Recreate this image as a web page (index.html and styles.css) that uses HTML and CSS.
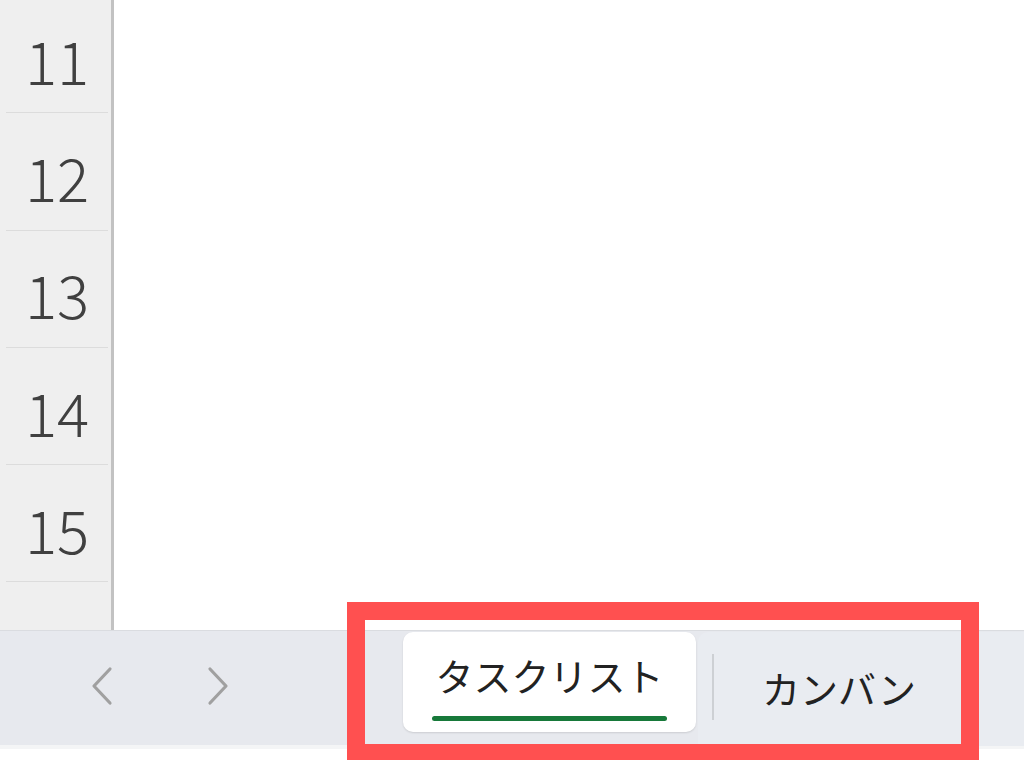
FILE: index.html
```html
<!DOCTYPE html>
<html>
<head>
    <title>Sheet tabs</title>
    <link rel="stylesheet" href="styles.css">
</head>
<body>
    <div class="sheet">
        <div class="row-heads">
            <div class="row-list">
                <div class="row-head">11</div>
                <div class="row-head">12</div>
                <div class="row-head">13</div>
                <div class="row-head">14</div>
                <div class="row-head">15</div>
                <div class="row-head"></div>
            </div>
        </div>
        <div class="cells"></div>
    </div>

    <div class="tab-bar">
        <div class="nav">
            <button class="nav-btn" title="前へ">
                <svg width="24" height="40" viewBox="0 0 24 40"><path d="M20 3 L4 20 L20 37" fill="none" stroke="#a0a0a0" stroke-width="3.2" stroke-linecap="round" stroke-linejoin="round"/></svg>
            </button>
            <button class="nav-btn" title="次へ">
                <svg width="24" height="40" viewBox="0 0 24 40"><path d="M4 3 L20 20 L4 37" fill="none" stroke="#a0a0a0" stroke-width="3.2" stroke-linecap="round" stroke-linejoin="round"/></svg>
            </button>
        </div>
        <div class="tab active">
            <span class="tab-label">タスクリスト</span>
            <span class="tab-line"></span>
        </div>
        <div class="tab inactive">
            <span class="tab-sep"></span>
            <span class="tab-label">カンバン</span>
        </div>
    </div>
    <div class="status-strip"></div>

    <!-- 注目枠 -->
    <div class="highlight"></div>
</body>
</html>
```

FILE: styles.css
```css
body {
    margin: 0;
    padding: 0;
    width: 1024px;
    height: 760px;
    overflow: hidden;
    position: relative;
    background-color: #ffffff;
    font-family: "Noto Sans CJK JP", "Noto Sans", sans-serif;
}
.sheet {
    display: flex;
    height: 630px;
}
.row-heads {
    width: 111px;
    background-color: #efefef;
    border-right: 3px solid #c2c2c2;
    overflow: hidden;
}
.row-list {
    margin-top: -4px;
}
.row-head {
    box-sizing: border-box;
    height: 117.3px;
    margin: 0 3px 0 6px;
    border-bottom: 1px solid #dcdcdc;
    display: flex;
    align-items: center;
    justify-content: center;
    font-size: 60px;
    font-weight: 300;
    color: #404040;
    padding-top: 8px;
}
.cells {
    flex: 1;
    background-color: #ffffff;
}
.tab-bar {
    box-sizing: border-box;
    display: flex;
    align-items: flex-start;
    height: 115px;
    background-color: #e7e9ee;
    border-top: 1px solid #dadce0;
}
.nav {
    width: 403px;
    display: flex;
    align-items: center;
    height: 110px;
    padding-left: 90px;
    box-sizing: border-box;
    gap: 92px;
}
.nav-btn {
    background: none;
    border: none;
    padding: 0;
    width: 24px;
    height: 40px;
    cursor: pointer;
}
.tab {
    box-sizing: border-box;
    height: 100px;
    margin-top: 1px;
}
.tab-label {
    font-size: 38px;
    line-height: 50px;
    font-weight: 400;
    color: #222222;
    white-space: nowrap;
}
.tab.active {
    width: 293px;
    background-color: #ffffff;
    border-radius: 10px;
    box-shadow: 0 1px 2px rgba(0, 0, 0, 0.12);
    display: flex;
    flex-direction: column;
    align-items: center;
    padding-top: 18px;
}
.tab-line {
    display: block;
    width: 235px;
    height: 5px;
    margin-top: 16px;
    border-radius: 3px;
    background-color: #17793a;
}
.tab.inactive {
    flex: 1;
    margin-left: 2px;
    height: 114px;
    background-color: #e9ecf1;
    border-top-left-radius: 10px;
    display: flex;
    align-items: flex-start;
    padding-left: 14px;
}
.tab-sep {
    width: 2px;
    height: 66px;
    margin-top: 22px;
    margin-right: 48px;
    background-color: #cdd0d4;
}
.tab.inactive .tab-label {
    margin-top: 31px;
}
.status-strip {
    height: 15px;
    border-top: 4px solid #f4f5f6;
    background-color: #ffffff;
}
.highlight {
    position: absolute;
    left: 347px;
    top: 602px;
    width: 632px;
    height: 160px;
    box-sizing: border-box;
    border: 18px solid #ff5050;
}
```
